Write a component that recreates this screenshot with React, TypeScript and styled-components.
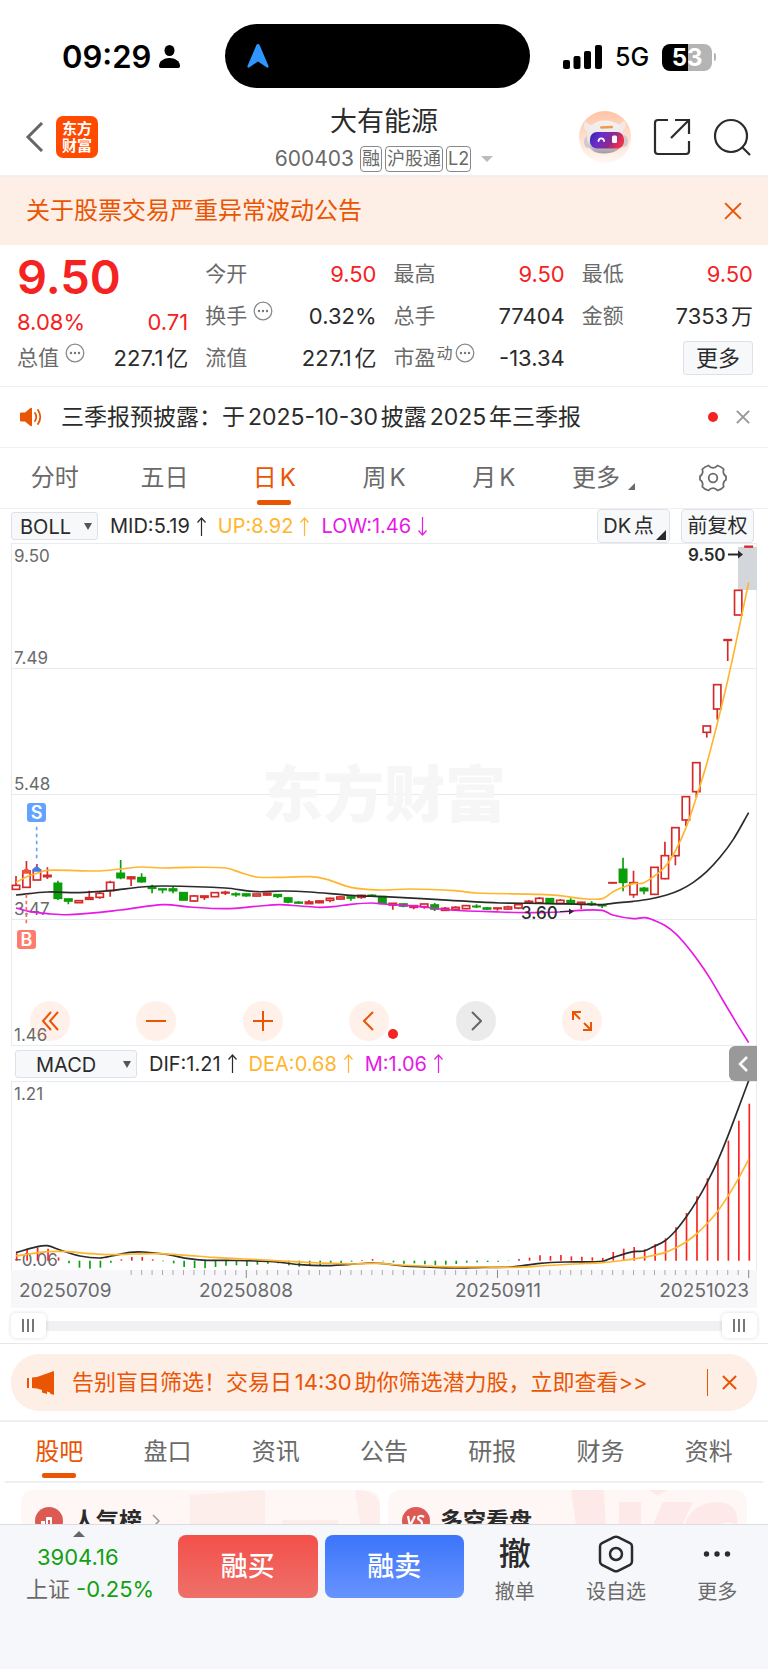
import React from 'react';
import styled, { createGlobalStyle, css } from 'styled-components';

const color = {
  brand: '#ea5504',
  brandSoft: '#fdeee6',
  rise: '#f52222',
  fall: '#12a012',
  ink: '#2b2b2b',
  grey: '#6a6a6a',
  line: '#efeff2',
  panel: '#f6f8fa',
  panelLine: '#dfe1ea',
  up: '#ffb62e',
  low: '#e619e6',
};

const GlobalStyle = createGlobalStyle`
  * { box-sizing: border-box; }
  body {
    margin: 0;
    background: #fff;
    color: ${color.ink};
    font-family: Inter, "Noto Sans CJK SC", sans-serif;
    font-size: 21px;
    line-height: 1.4;
    text-autospace: normal;
  }
  button, select, input { font: inherit; color: inherit; margin: 0; padding: 0; border: 0; background: none; }
  h1, h2, p, dl, dt, dd { margin: 0; font-weight: 400; font-size: inherit; }
  a { color: inherit; text-decoration: none; }
  svg { display: block; flex: none; }
`;

const Page = styled.div`
  display: flex;
  flex-direction: column;
  min-height: 100vh;
  overflow: hidden;
`;

/* ---------- status bar ---------- */
const StatusBar = styled.div`
  display: grid;
  grid-template-columns: 225fr 305fr 238fr;
  align-items: center;
  height: 92px;
  padding-top: 20px;
  color: #000;
`;
const StatusSide = styled.div<{ $end?: boolean }>`
  display: flex;
  align-items: center;
  gap: ${(p) => (p.$end ? 13 : 8)}px;
  padding-top: 2px;
  padding-left: ${(p) => (p.$end ? 33 : 62)}px;
`;
const Clock = styled.span`
  font-size: 31px;
  font-weight: 600;
`;
const Network = styled.span`
  font-size: 25px;
  font-weight: 500;
`;
const Island = styled.div`
  display: flex;
  align-items: center;
  height: 64px;
  padding-left: 21px;
  border-radius: 32px;
  background: #000;
`;
const Battery = styled.div`
  display: flex;
  align-items: center;
  gap: 2px;
  &::after {
    content: '';
    width: 2px;
    height: 8px;
    border-radius: 0 2px 2px 0;
    background: #b4b4b4;
  }
`;
const BatteryLevel = styled.span`
  width: 50px;
  height: 27px;
  border-radius: 8px;
  background: linear-gradient(90deg, #000 53%, #b4b4b4 53%);
  color: #fff;
  font-size: 24px;
  font-weight: 700;
  line-height: 27px;
  text-align: center;
`;

/* ---------- header ---------- */
const Header = styled.header`
  display: grid;
  grid-template-columns: 1fr auto 1fr;
  height: 85px;
  padding: 0 17px;
  border-bottom: 2px solid ${color.line};
`;
const HeaderGroup = styled.div<{ $end?: boolean }>`
  display: flex;
  align-items: center;
  gap: ${(p) => (p.$end ? 22 : 12)}px;
  justify-content: ${(p) => (p.$end ? 'flex-end' : 'flex-start')};
  padding: 6px 0 0 7px;
`;
const IconButton = styled.button`
  display: flex;
  align-items: center;
  justify-content: center;
  cursor: pointer;
`;
const Logo = styled.a`
  width: 42px;
  height: 42px;
  padding-top: 4px;
  border-radius: 7px;
  background: #ff4a00;
  color: #fff;
  font-size: 15px;
  font-weight: 700;
  line-height: 17px;
  text-align: center;
`;
const TitleBlock = styled.div`
  display: flex;
  flex-direction: column;
  align-items: center;
  justify-content: flex-end;
`;
const Title = styled.h1`
  font-size: 27px;
  line-height: 40px;
`;
const SubTitle = styled.div`
  display: flex;
  align-items: center;
  gap: 3px;
  height: 33px;
  color: ${color.grey};
  font-size: 21px;
`;
const Tag = styled.span`
  height: 26px;
  padding: 0 1px;
  border: 1px solid #888;
  border-radius: 4px;
  font-size: 18px;
  line-height: 24px;
`;
const Code = styled.span`
  margin-right: 3px;
`;
const Caret = styled.span<{ $up?: boolean; $gap?: number }>`
  width: 0;
  height: 0;
  margin-left: ${(p) => p.$gap ?? 0}px;
  border: 6px solid transparent;
  ${(p) =>
    p.$up
      ? css`border-top: 0; border-bottom-color: #666;`
      : css`border-bottom: 0; border-top-color: #bbb;`}
`;

/* ---------- notice ---------- */
const Notice = styled.section`
  display: flex;
  align-items: center;
  justify-content: space-between;
  height: 68px;
  padding: 0 26px;
  background: ${color.brandSoft};
  color: ${color.brand};
  font-size: 24px;
`;

/* ---------- quote ---------- */
const Quote = styled.section`
  display: grid;
  grid-template-columns: repeat(4, 1fr);
  column-gap: 17px;
  padding: 8px 15px 7px 17px;
  border-bottom: 1px solid ${color.line};
`;
const QuoteColumn = styled.dl`
  display: flex;
  flex-direction: column;
`;
const QuoteRow = styled.div<{ $short?: boolean }>`
  display: flex;
  align-items: center;
  justify-content: space-between;
  height: ${(p) => (p.$short ? 30 : 42)}px;
  white-space: nowrap;
`;
const Price = styled.div`
  height: 54px;
  color: ${color.rise};
  font-size: 47px;
  font-weight: 600;
  line-height: 48px;
`;
const Label = styled.dt`
  display: flex;
  align-items: center;
  gap: 6px;
  color: ${color.grey};
`;
const Value = styled.dd<{ $rise?: boolean }>`
  color: ${(p) => (p.$rise ? color.rise : 'inherit')};
  font-size: 22px;
`;
const Raised = styled.span<{ $tight?: boolean }>`
  display: flex;
  align-items: center;
  gap: 2px;
  margin: 0 0 9px ${(p) => (p.$tight ? -5 : 0)}px;
  font-size: 16px;
`;
const MoreButton = styled.button`
  width: 70px;
  height: 34px;
  margin-left: auto;
  border: 1px solid ${color.panelLine};
  border-radius: 3px;
  background: ${color.panel};
  font-size: 22px;
  line-height: 30px;
`;

/* ---------- news ---------- */
const News = styled.section`
  display: flex;
  align-items: center;
  height: 61px;
  padding: 0 18px 0 19px;
  border-bottom: 1px solid ${color.line};
  font-size: 23px;
`;
const NewsText = styled.a`
  flex: 1;
  margin-left: 18px;
`;
const Dot = styled.span`
  width: 10px;
  height: 10px;
  margin-right: 18px;
  border-radius: 50%;
  background: ${color.rise};
`;

/* ---------- tabs ---------- */
const Tabs = styled.nav<{ $inset?: boolean }>`
  display: grid;
  grid-template-columns: repeat(7, 1fr);
  height: 61px;
  margin: 0 ${(p) => (p.$inset ? 5 : 0)}px;
  border-bottom: ${(p) => (p.$inset ? 2 : 1)}px solid ${color.line};
`;
const Tab = styled.button<{ $active?: boolean }>`
  position: relative;
  display: flex;
  align-items: center;
  justify-content: center;
  color: ${(p) => (p.$active ? color.brand : color.grey)};
  font-size: 24px;
  &::after {
    content: '';
    display: ${(p) => (p.$active ? 'block' : 'none')};
    position: absolute;
    bottom: 3px;
    left: calc(50% - 17px);
    width: 34px;
    height: 5px;
    border-radius: 2px;
    background: ${color.brand};
  }
`;
const Corner = styled.span<{ $size: number; $color?: string }>`
  align-self: flex-end;
  width: 0;
  height: 0;
  border-left: ${(p) => p.$size}px solid transparent;
  border-bottom: ${(p) => p.$size}px solid ${(p) => p.$color ?? color.grey};
`;
const TabCorner = styled(Corner)`
  margin: 0 0 18px 8px;
`;

/* ---------- charts ---------- */
const Toolbar = styled.div<{ $lower?: boolean }>`
  display: flex;
  align-items: center;
  gap: 12px;
  height: ${(p) => (p.$lower ? 35 : 34)}px;
  padding: ${(p) => (p.$lower ? '0 11px 0 15px' : '0 14px 0 11px')};
  font-size: 20px;
  white-space: nowrap;
`;
const SelectBox = styled.label<{ $wide?: boolean }>`
  position: relative;
  width: ${(p) => (p.$wide ? 122 : 87)}px;
  height: 28px;
  border: 1px solid ${color.panelLine};
  border-radius: 3px;
  background: ${color.panel};
  &::after {
    content: '';
    position: absolute;
    top: 10px;
    right: 5px;
    border: 4px solid transparent;
    border-top: 7px solid #555;
    border-bottom: 0;
  }
`;
const Select = styled.select<{ $wide?: boolean }>`
  width: 100%;
  height: 26px;
  padding-left: ${(p) => (p.$wide ? 20 : 8)}px;
  appearance: none;
  line-height: 26px;
  outline: none;
`;
const Reading = styled.span<{ $color?: string }>`
  display: flex;
  align-items: center;
  gap: 7px;
  color: ${(p) => p.$color ?? 'inherit'};
`;
const ToolButton = styled.button`
  display: flex;
  align-items: center;
  justify-content: center;
  width: 73px;
  height: 34px;
  border: 1px solid ${color.panelLine};
  border-radius: 4px;
  background: ${color.panel};
`;
const ToolCorner = styled(Corner)`
  margin: 0 -2px 2px 2px;
`;
const ToolEnd = styled.div`
  display: flex;
  gap: 11px;
  margin-left: auto;
`;
const CollapseButton = styled(IconButton)`
  width: 28px;
  height: 35px;
  margin-left: auto;
  border-radius: 6px 0 0 6px;
  background: #999;
`;
const ChartArea = styled.section`
  position: relative;
  margin: 0 11px;
  svg.plot {
    position: relative;
    width: 100%;
    height: auto;
  }
`;
const GridLayer = styled.div<{ $open?: boolean }>`
  position: absolute;
  inset: 0;
  display: grid;
  grid-auto-rows: 1fr;
  border: 1px solid #e9ebee;
  border-bottom-width: ${(p) => (p.$open ? 0 : 1)}px;
`;
const GridRow = styled.div<{ $first?: boolean }>`
  display: flex;
  flex-direction: column;
  justify-content: ${(p) => (p.$first ? 'space-between' : 'flex-end')};
  padding: ${(p) => (p.$first ? 2 : 0)}px 0 0 2px;
  border-bottom: 1px solid #e4eaef;
  color: ${color.grey};
  font-size: 17px;
  line-height: 20px;
  &:last-child { border-bottom: 0; }
`;
const Watermark = styled.div`
  position: absolute;
  inset: 0;
  display: flex;
  align-items: center;
  justify-content: center;
  color: #f6f6f6;
  font-size: 61px;
  font-weight: 900;
  line-height: 60px;
`;
const ChartControls = styled.div`
  position: absolute;
  right: 155px;
  bottom: 5px;
  left: 19px;
  display: flex;
  justify-content: space-between;
`;
const RoundButton = styled(IconButton)<{ $muted?: boolean }>`
  position: relative;
  width: 40px;
  height: 40px;
  border-radius: 50%;
  background: ${(p) => (p.$muted ? 'rgba(0,0,0,.08)' : 'rgba(255,90,10,.09)')};
  color: ${(p) => (p.$muted ? '#666' : color.brand)};
`;
const ControlBadge = styled.span`
  position: absolute;
  right: -9px;
  bottom: 2px;
  width: 10px;
  height: 10px;
  border-radius: 50%;
  background: ${color.rise};
`;
const Axis = styled.div`
  margin: 0 11px;
  background: #f7f7fa;
  svg { width: 100%; height: auto; }
`;
const Range = styled.div`
  position: relative;
  display: flex;
  align-items: center;
  height: 36px;
  padding: 0 11px;
  border-bottom: 1px solid #e6e7ea;
`;
const RangeTrack = styled.div`
  flex: 1;
  height: 10px;
  background: #f1f1f3;
`;
const RangeInput = styled.input`
  position: absolute;
  top: 4px;
  left: 11px;
  width: calc(100% - 22px);
  height: 27px;
  appearance: none;
  pointer-events: none;
  &::-webkit-slider-thumb {
    appearance: none;
    width: 35px;
    height: 25px;
    border-radius: 5px;
    background:
      linear-gradient(#777, #777) 11px 6px / 2px 13px no-repeat,
      linear-gradient(#777, #777) 16px 6px / 2px 13px no-repeat,
      linear-gradient(#777, #777) 21px 6px / 2px 13px no-repeat,
      #fff;
    box-shadow: 0 0 4px rgba(0, 0, 0, 0.14);
    pointer-events: auto;
  }
`;

/* ---------- promo ---------- */
const PromoWrap = styled.section`
  padding: 10px 11px 9px;
  border-bottom: 2px solid ${color.line};
`;
const Promo = styled.div`
  display: flex;
  align-items: center;
  height: 57px;
  padding: 0 20px 0 16px;
  border-radius: 28px;
  background: ${color.brandSoft};
  color: ${color.brand};
  font-size: 22px;
  white-space: nowrap;
`;
const PromoLink = styled.a`
  flex: 1;
  margin-left: 17px;
`;
const PromoClose = styled(IconButton)`
  height: 27px;
  padding-left: 14px;
  border-left: 1px solid ${color.brand};
`;

/* ---------- cards ---------- */
const Cards = styled.section`
  display: grid;
  grid-template-columns: 1fr 1fr;
  gap: 8px;
  max-height: 41px;
  padding: 7px 21px 0;
  overflow: hidden;
`;
const Card = styled.a`
  position: relative;
  display: flex;
  align-items: center;
  gap: 10px;
  height: 84px;
  padding: 0 14px 22px;
  border-radius: 12px;
  background: #fef7f5;
  overflow: hidden;
  font-size: 23px;
  font-weight: 700;
`;
const CardArt = styled.svg`
  position: absolute;
  top: 0;
  right: 0;
`;

/* ---------- bottom bar ---------- */
const BottomBar = styled.footer`
  display: grid;
  grid-template-columns: 178fr 286fr 304fr;
  flex: 1;
  align-items: start;
  min-height: 145px;
  padding-top: 6px;
  border-top: 1px solid #dcdde2;
  background: #f6f7fa;
`;
const IndexBox = styled.div`
  padding-left: 26px;
`;
const IndexLine = styled.div<{ $fall?: boolean }>`
  display: flex;
  gap: 6px;
  height: 32px;
  padding-left: ${(p) => (p.$fall ? 11 : 0)}px;
  color: ${(p) => (p.$fall ? color.fall : color.grey)};
  font-size: 22px;
  line-height: 32px;
  white-space: nowrap;
`;
const IndexCaret = styled(Caret)`
  display: block;
  margin: 0 0 4px 47px;
`;
const Fall = styled.span`
  color: ${color.fall};
`;
const Trade = styled.div`
  display: grid;
  grid-template-columns: 1fr 1fr;
  gap: 7px;
  padding-top: 4px;
`;
const TradeButton = styled.button<{ $sell?: boolean }>`
  height: 63px;
  border-radius: 8px;
  background: ${(p) =>
    p.$sell ? 'linear-gradient(#3b75fa, #6893ff)' : 'linear-gradient(#f4504a, #ed7069)'};
  color: #fff;
  font-size: 27px;
  font-weight: 500;
`;
const Tools = styled.div`
  display: grid;
  grid-template-columns: repeat(3, 1fr);
`;
const Tool = styled.button`
  display: flex;
  flex-direction: column;
  align-items: center;
  color: ${color.grey};
  font-size: 20px;
  line-height: 30px;
`;
const ToolIcon = styled.span`
  display: flex;
  align-items: center;
  height: 46px;
  color: ${color.ink};
  font-size: 32px;
  font-weight: 500;
`;

/* ---------- icons ---------- */
type CloseProps = { size: number; stroke: string; width?: number };
const CloseIcon = ({ size, stroke, width = 2 }: CloseProps) => (
  <svg width={size} height={size} viewBox="0 0 16 16" fill="none" stroke={stroke} strokeWidth={(width * 16) / size}>
    <path d="M1 1 15 15M15 1 1 15" />
  </svg>
);
const MoreInfo = () => (
  <svg width="20" height="20" viewBox="0 0 20 20" fill="none" stroke="#8a8a8a" strokeWidth="1.3">
    <circle cx="10" cy="10" r="8.8" />
    <g fill="#777" stroke="none">
      <circle cx="6" cy="10" r="1.2" />
      <circle cx="10" cy="10" r="1.2" />
      <circle cx="14" cy="10" r="1.2" />
    </g>
  </svg>
);
const Arrow = ({ down }: { down?: boolean }) => (
  <svg width="9" height="19" viewBox="0 0 9 19" fill="none" stroke="currentColor" strokeWidth="1.2">
    <path d={down ? 'M4.5 0v18M.5 13.500l4 4.500 4-4.500' : 'M4.5 19V1M.5 5.500l4-4.500 4 4.500'} />
  </svg>
);
const Robot = () => (
  <svg width="52" height="52" viewBox="0 0 52 52">
    <defs>
      <linearGradient id="halo" x2="0" y2="1">
        <stop offset="0" stopColor="#ffc4a6" />
        <stop offset="1" stopColor="#fff8f4" />
      </linearGradient>
      <linearGradient id="shell" x2="0" y2="1">
        <stop offset="0" stopColor="#f6f1f0" />
        <stop offset=".6" stopColor="#e9e5e7" />
        <stop offset="1" stopColor="#a09aa0" />
      </linearGradient>
      <linearGradient id="visor" x2="1" y2=".3">
        <stop offset="0" stopColor="#2d2aa0" />
        <stop offset=".35" stopColor="#6a2bd0" />
        <stop offset=".7" stopColor="#8a2a8e" />
        <stop offset="1" stopColor="#ee2f4c" />
      </linearGradient>
    </defs>
    <circle cx="26" cy="26" r="26" fill="url(#halo)" />
    <path d="M6 10c-2 5-1 9 3 11l8-7c-5 1-9-1-11-4zM45 9c3 4 2 9-2 11l-7-7c4 1 8-1 9-4z" fill="#f2e9e7" />
    <ellipse cx="9" cy="31" rx="4" ry="6" fill="#cfcad0" />
    <ellipse cx="45" cy="30" rx="4" ry="6" fill="#cfcad0" />
    <path d="M26 9.500c12 0 19 7 19 17S38 42 26 42.500 8 37 8 27 14 9.500 26 9.500z" fill="url(#shell)" />
    <rect x="21" y="15" width="13" height="2.500" rx="1.200" fill="#f39a4a" transform="rotate(-3 27 16)" />
    <rect x="11" y="21" width="34" height="16.500" rx="7" fill="url(#visor)" />
    <path d="M19.500 30c.6-3.500 5-3.500 5.600 0" fill="none" stroke="#fff" strokeWidth="1.800" strokeLinecap="round" />
    <rect x="33" y="24.500" width="5" height="7.500" rx="1.500" fill="#fff" />
  </svg>
);
const Gear = () => (
  <svg width="28" height="28" viewBox="0 0 28 28" fill="none" stroke="#6a6a6a" strokeWidth="1.800" strokeLinejoin="round">
    <path d="M9.500 1.500c1.200 1.600 2.600 2.300 4.500 2.300s3.300-.7 4.500-2.300c2.800.8 4.700 1.900 6.200 3.800-.7 1.900-.7 3.200.2 4.700.8 1.400 1.300 1.700 2.100 2.200v3.600c-.8.500-1.300.8-2.100 2.200-.9 1.500-.9 2.800-.2 4.700-1.500 1.900-3.400 3-6.200 3.800-1.200-1.600-2.600-2.300-4.500-2.300s-3.300.7-4.500 2.300c-2.800-.8-4.700-1.900-6.200-3.800.7-1.900.7-3.200-.2-4.700-.8-1.400-1.300-1.700-2.100-2.200v-3.600c.8-.5 1.300-.8 2.100-2.200.9-1.500.9-2.800.2-4.700 1.500-1.900 3.400-3 6.200-3.800z" />
    <circle cx="14" cy="14" r="4.300" />
  </svg>
);

/* ---------- chart data ----------
   Chart units are a third of a pixel; candles are 31.4 units apart. */
const STEP = 31.4;
type Point = [number, number];
type Candle = [kind: 'r' | 'g', high: number, top: number, bottom: number, low: number];

const candles: Candle[] = [
  ['r', 288, 316, 328, 328], ['r', 243, 273, 322, 324], ['r', 252, 270, 300, 300], ['r', 262, 286, 290, 297],
  ['g', 302, 310, 355, 360], ['g', 356, 357, 363, 373], ['r', 361, 362, 368, 369], ['r', 332, 353, 358, 358],
  ['r', 335, 340, 352, 356], ['r', 302, 307, 332, 350], ['g', 240, 280, 293, 298], ['r', 289, 291, 296, 318],
  ['g', 280, 293, 305, 308], ['g', 314, 323, 325, 340], ['g', 326, 327, 329, 340], ['g', 318, 327, 332, 340],
  ['g', 338, 338, 360, 360], ['r', 345, 348, 363, 366], ['r', 347, 348, 352, 360], ['r', 338, 338, 350, 350],
  ['r', 332, 337, 339, 345], ['g', 337, 342, 344, 350], ['g', 340, 342, 347, 350], ['r', 341, 342, 348, 349],
  ['r', 339, 340, 345, 347], ['g', 342, 344, 349, 354], ['g', 352, 354, 366, 370], ['g', 363, 367, 369, 371],
  ['r', 360, 366, 371, 372], ['r', 361, 363, 368, 370], ['r', 353, 355, 361, 367], ['r', 349, 351, 357, 359],
  ['g', 350, 351, 354, 362], ['r', 344, 346, 352, 356], ['g', 343, 346, 348, 350], ['g', 349, 350, 370, 370],
  ['r', 369, 370, 375, 389], ['g', 371, 372, 378, 382], ['r', 375, 377, 382, 388], ['r', 371, 372, 380, 386],
  ['g', 369, 375, 387, 393], ['r', 381, 385, 391, 392], ['r', 379, 382, 388, 392], ['r', 377, 377, 386, 388],
  ['g', 373, 379, 380, 384], ['g', 382, 384, 387, 390], ['r', 384, 384, 386, 392], ['r', 377, 381, 387, 389],
  ['r', 372, 374, 384, 388], ['r', 360, 364, 368, 370], ['r', 351, 355, 368, 370], ['g', 354, 356, 370, 372],
  ['r', 357, 361, 370, 372], ['g', 355, 362, 370, 373], ['r', 365, 367, 373, 388], ['g', 364, 371, 373, 378],
  ['g', 373, 375, 377, 384], ['r', 307, 308, 309, 310], ['g', 233, 268, 307, 334], ['r', 272, 308, 344, 353],
  ['g', 321, 325, 332, 343], ['r', 262, 262, 343, 343], ['r', 185, 227, 296, 298], ['r', 143, 143, 227, 256],
  ['r', 50, 50, 120, 138], ['r', -52, -52, 35, 52], ['r', -162, -162, -143, -127], ['r', -286, -286, -213, -181],
  ['r', -421, -421, -419, -357], ['r', -569, -569, -495, -495], ['r', -702, -701, -699, -698],
];

const upper: Point[] = [
  [48, 307], [80, 290], [110, 280], [142, 271], [300, 273], [361, 267], [424, 261], [487, 264], [565, 262],
  [676, 264], [720, 277], [770, 291], [850, 292], [930, 290], [980, 298], [1052, 322], [1115, 329], [1152, 330],
  [1230, 327], [1366, 332], [1430, 339], [1620, 343], [1680, 347], [1740, 355], [1807, 356], [1838, 336],
  [1869, 322], [1900, 311], [1930, 309], [1963, 288], [1994, 262], [2026, 213], [2058, 143], [2089, 52],
  [2120, -48], [2152, -170], [2183, -298], [2214, -440], [2246, -593],
];
const middle: Point[] = [
  [48, 345], [142, 336], [236, 338], [330, 332], [424, 321], [490, 318], [676, 324], [770, 335], [850, 333],
  [930, 336], [1052, 346], [1152, 350], [1252, 355], [1352, 361], [1500, 369], [1620, 370], [1807, 374],
  [1838, 370], [1900, 364], [1950, 357], [2000, 345], [2040, 330], [2080, 307], [2120, 275], [2160, 232],
  [2200, 178], [2246, 98],
];
const lower: Point[] = [
  [48, 384], [90, 395], [142, 401], [210, 404], [362, 390], [490, 374], [570, 381], [676, 386], [780, 378],
  [838, 374], [900, 378], [958, 382], [1000, 380], [1052, 373], [1115, 369], [1152, 372], [1252, 379],
  [1352, 390], [1500, 396], [1600, 398], [1680, 396], [1740, 391], [1807, 391], [1838, 405], [1900, 416],
  [1935, 413], [1965, 422], [1994, 436], [2026, 460], [2058, 495], [2089, 535], [2130, 595], [2170, 663],
  [2210, 730], [2246, 788],
];
const dif: Point[] = [
  [48, 638], [112, 620], [142, 617], [180, 630], [240, 648], [300, 654], [340, 647], [390, 637], [430, 636],
  [500, 643], [560, 655], [620, 661], [680, 661], [820, 665], [900, 674], [970, 677], [1050, 673], [1115, 669],
  [1152, 671], [1210, 678], [1280, 681], [1360, 684], [1450, 682], [1530, 681], [1620, 670], [1700, 666],
  [1807, 664], [1840, 652], [1900, 635], [1932, 633], [1960, 620], [1994, 603], [2026, 573], [2058, 532],
  [2089, 485], [2120, 430], [2152, 365], [2183, 290], [2214, 208], [2246, 122],
];
const dea: Point[] = [
  [48, 648], [100, 640], [145, 635], [200, 635], [260, 640], [330, 644], [400, 642], [480, 641], [560, 646],
  [640, 652], [740, 657], [860, 664], [960, 669], [1060, 672], [1130, 670], [1200, 675], [1300, 679],
  [1450, 681], [1530, 682], [1620, 678], [1720, 672], [1807, 668], [1870, 661], [1932, 652], [1994, 638],
  [2026, 624], [2058, 606], [2089, 582], [2120, 552], [2152, 515], [2183, 470], [2214, 418], [2246, 358],
];
/* Histogram ends: above 662 is a positive bar, below it a negative one. */
const BASE = 662;
const bars = [
  640, 628, 622, 626, 652, 670, 683, 686, 683, 668, 658, 651, 651, 658, 664, 670, 681, 684, 685, 681, 677, 676,
  678, 674, 671, 670, 676, 680, 678, 676, 670, 669, 665, 660, 657, 664, 667, 671, 670, 673, 675, 674, 672, 668,
  667, 666, 665, 663, 657, 653, 646, 648, 645, 649, 650, 652, 654, 636, 626, 621, 628, 613, 595, 562, 519, 469,
  415, 360, 302, 242, 191,
];

const smooth = (pts: Point[]) =>
  pts.reduce((d, p, i) => {
    if (i === 0) return `M${p[0]} ${p[1]}`;
    const a = pts[Math.max(i - 2, 0)];
    const b = pts[i - 1];
    const c = pts[Math.min(i + 1, pts.length - 1)];
    const dx = (p[0] - b[0]) / 3;
    const s1 = (p[1] - a[1]) / (p[0] - a[0]);
    const s2 = (c[1] - b[1]) / (c[0] - b[0]);
    return `${d}C${b[0] + dx} ${b[1] + s1 * dx} ${p[0] - dx} ${p[1] - s2 * dx} ${p[0]} ${p[1]}`;
  }, '');

const CandleShape = ({ data, index }: { data: Candle; index: number }) => {
  const [kind, high, top, bottom, low] = data;
  const x = 48 + STEP * index;
  const tone = kind === 'r' ? '#d42a2a' : '#0a9e0a';
  return (
    <g stroke={tone} strokeWidth="5" fill={kind === 'g' ? tone : 'none'}>
      <path d={`M${x} ${high}V${top}M${x} ${bottom}V${low}`} />
      <rect x={x - 11} y={top} width="22" height={Math.max(bottom - top, 1)} />
    </g>
  );
};

const Marker = ({ x, y, fill, children }: { x: number; y: number; fill: string; children: string }) => (
  <g>
    <rect x={x} y={y} width="19" height="19" rx="3" fill={fill} />
    <text x={x + 9.5} y={y + 16} fill="#fff" fontSize="18" fontWeight="600" textAnchor="middle">{children}</text>
  </g>
);

const PriceChart = () => (
  <ChartArea aria-label="日K线图">
    <GridLayer>
      <GridRow $first><span>9.50</span><span>7.49</span></GridRow>
      <GridRow>5.48</GridRow>
      <GridRow>3.47</GridRow>
      <GridRow>1.46</GridRow>
    </GridLayer>
    <Watermark aria-hidden>东方财富</Watermark>
    <svg className="plot" viewBox="0 0 746 503">
      <rect x="727" y="4" width="19" height="43" fill="#d3d7dc" />
      <g transform="scale(.33333) translate(-33 711)" fill="none">
        {candles.map((c, i) => <CandleShape key={i} data={c} index={i} />)}
        <path d={smooth(upper)} stroke={color.up} strokeWidth="5" />
        <path d={smooth(middle)} stroke={color.ink} strokeWidth="5" />
        <path d={smooth(lower)} stroke={color.low} strokeWidth="5" />
        <path d="M110 140V240" stroke="#62a3ff" strokeWidth="5" strokeDasharray="11 10" />
        <path d="M79 343V437" stroke="#ff6a5c" strokeWidth="5" strokeDasharray="11 8" />
        <path d="M110 257l12 10v8H98v-8z" fill="#3f7ee8" />
        <path d="M79 263l12 10v8H67v-8z" fill="#f4503c" />
      </g>
      <Marker x={16} y={260} fill="#62a3ff">S</Marker>
      <Marker x={6} y={387} fill="#ff7b6c">B</Marker>
      <g fill={color.ink} stroke="none" fontSize="17">
        <text x="677" y="18" fontWeight="600">9.50</text>
        <text x="510" y="376" fontWeight="500">3.60</text>
        <path d="M717 10.500h10v-3l5 4-5 4v-3h-10zM549 368h9v-2.500l5 3-5 3V369h-9z" />
      </g>
    </svg>
    <ChartControls>
      <RoundButton aria-label="最早">
        <svg width="18" height="20" viewBox="0 0 18 20" fill="none" stroke="currentColor" strokeWidth="2"><path d="M10 1 2 10l8 9M17 1 9 10l8 9" /></svg>
      </RoundButton>
      <RoundButton aria-label="缩小">
        <svg width="20" height="20" fill="none" stroke="currentColor" strokeWidth="2"><path d="M0 10h20" /></svg>
      </RoundButton>
      <RoundButton aria-label="放大">
        <svg width="20" height="20" fill="none" stroke="currentColor" strokeWidth="2"><path d="M0 10h20M10 0v20" /></svg>
      </RoundButton>
      <RoundButton aria-label="向前">
        <svg width="12" height="20" viewBox="0 0 12 20" fill="none" stroke="currentColor" strokeWidth="2"><path d="M10 1 1 10l9 9" /></svg>
        <ControlBadge />
      </RoundButton>
      <RoundButton $muted aria-label="向后">
        <svg width="12" height="20" viewBox="0 0 12 20" fill="none" stroke="currentColor" strokeWidth="2"><path d="M2 1l9 9-9 9" /></svg>
      </RoundButton>
      <RoundButton aria-label="全屏">
        <svg width="22" height="22" viewBox="0 0 22 22" fill="none" stroke="currentColor" strokeWidth="2"><path d="M2 10V2h8M2 2l7 7M20 12v8h-8M20 20l-7-7" /></svg>
      </RoundButton>
    </ChartControls>
  </ChartArea>
);

const MacdChart = () => (
  <ChartArea aria-label="MACD">
    <GridLayer $open>
      <GridRow $first><span>1.21</span><span>-0.06</span></GridRow>
    </GridLayer>
    <svg className="plot" viewBox="0 0 746 189">
      <g transform="scale(.33333) translate(-33 -123)" fill="none">
        {bars.map((end, i) => (
          <path key={i} d={`M${50 + STEP * i} ${BASE}V${end}`} stroke={end < BASE ? '#fa2020' : '#0a9e0a'} strokeWidth="5" />
        ))}
        <path d={smooth(dif)} stroke={color.ink} strokeWidth="5" />
        <path d={smooth(dea)} stroke={color.up} strokeWidth="5" />
      </g>
    </svg>
  </ChartArea>
);

const DateAxis = () => (
  <Axis>
    <svg viewBox="0 0 746 38">
      {Array.from({ length: 60 }, (_, k) => k + 11).map((i) => {
        const major = i === 22 || i === 46 || i === 70;
        return <rect key={i} x={4.5 + (STEP / 3) * i} y="0" width="1" height={major ? 8 : 5} fill={major ? '#888' : '#aaa'} />;
      })}
      <g fill={color.grey} fontSize="19">
        <text x="8" y="27">20250709</text>
        <text x="235" y="27" textAnchor="middle">20250808</text>
        <text x="487" y="27" textAnchor="middle">20250911</text>
        <text x="738" y="27" textAnchor="end">20251023</text>
      </g>
    </svg>
  </Axis>
);

const periods = ['分时', '五日', '日K', '周K', '月K'];
const sections = ['股吧', '盘口', '资讯', '公告', '研报', '财务', '资料'];

export default function App() {
  return (
    <Page>
      <GlobalStyle />
      <StatusBar>
        <StatusSide>
          <Clock>09:29</Clock>
          <svg width="21" height="23" viewBox="0 0 21 23"><ellipse cx="10.500" cy="5.500" rx="5" ry="5.500" /><path d="M0 21c0-5 5-8 10.500-8S21 16 21 21c0 1-.5 2-2 2H2c-1.500 0-2-1-2-2z" /></svg>
        </StatusSide>
        <Island>
          <svg width="24" height="26" viewBox="0 0 24 26" fill="#2f96ff"><path d="M12 1c1.200 0 1.600.8 2 2l8.500 20c.5 1.500-.8 2.200-2 1.300L12 18.500l-8.500 5.800c-1.200.9-2.500.2-2-1.300L10 3c.4-1.200.8-2 2-2z" /></svg>
        </Island>
        <StatusSide $end>
          <svg width="39" height="24" viewBox="0 0 39 24"><rect y="15" width="7" height="9" rx="2" /><rect x="10.500" y="11" width="7" height="13" rx="2" /><rect x="21" y="6" width="7" height="18" rx="2" /><rect x="32" width="7" height="24" rx="2" /></svg>
          <Network>5G</Network>
          <Battery><BatteryLevel>53</BatteryLevel></Battery>
        </StatusSide>
      </StatusBar>

      <Header>
        <HeaderGroup>
          <IconButton aria-label="返回">
            <svg width="20" height="30" viewBox="0 0 20 30" fill="none" stroke="#666" strokeWidth="3"><path d="M18 1 4 15l14 14" /></svg>
          </IconButton>
          <Logo href="#home">东方<br />财富</Logo>
        </HeaderGroup>
        <TitleBlock>
          <Title>大有能源</Title>
          <SubTitle>
            <Code>600403</Code>
            <Tag>融</Tag>
            <Tag>沪股通</Tag>
            <Tag>L2</Tag>
            <Caret $gap={7} />
          </SubTitle>
        </TitleBlock>
        <HeaderGroup $end>
          <IconButton aria-label="智能助手"><Robot /></IconButton>
          <IconButton aria-label="分享">
            <svg width="38" height="38" viewBox="0 0 38 38" fill="none" stroke={color.ink} strokeWidth="2.200"><path d="M15 2H5Q2 2 2 5v28q0 3 3 3h28q3 0 3-3V23M22 2h14v14M36 2 18 20" /></svg>
          </IconButton>
          <IconButton aria-label="搜索">
            <svg width="38" height="38" viewBox="0 0 38 38" fill="none" stroke={color.ink} strokeWidth="2.200"><circle cx="18" cy="18" r="16" /><path d="m29 29 8 8" /></svg>
          </IconButton>
        </HeaderGroup>
      </Header>

      <Notice>
        <a href="#notice">关于股票交易严重异常波动公告</a>
        <IconButton aria-label="关闭公告"><CloseIcon size={18} stroke={color.brand} /></IconButton>
      </Notice>

      <Quote>
        <QuoteColumn as="div">
          <Price>9.50</Price>
          <QuoteRow $short><Value as="span" $rise>8.08%</Value><Value as="span" $rise>0.71</Value></QuoteRow>
          <QuoteRow><Label as="span">总值<Raised><MoreInfo /></Raised></Label><Value as="span">227.1亿</Value></QuoteRow>
        </QuoteColumn>
        <QuoteColumn>
          <QuoteRow><Label>今开</Label><Value $rise>9.50</Value></QuoteRow>
          <QuoteRow><Label>换手<Raised><MoreInfo /></Raised></Label><Value>0.32%</Value></QuoteRow>
          <QuoteRow><Label>流值</Label><Value>227.1亿</Value></QuoteRow>
        </QuoteColumn>
        <QuoteColumn>
          <QuoteRow><Label>最高</Label><Value $rise>9.50</Value></QuoteRow>
          <QuoteRow><Label>总手</Label><Value>77404</Value></QuoteRow>
          <QuoteRow><Label>市盈<Raised $tight>动<MoreInfo /></Raised></Label><Value>-13.34</Value></QuoteRow>
        </QuoteColumn>
        <QuoteColumn as="div">
          <QuoteRow><Label as="span">最低</Label><Value as="span" $rise>9.50</Value></QuoteRow>
          <QuoteRow><Label as="span">金额</Label><Value as="span">7353万</Value></QuoteRow>
          <QuoteRow><MoreButton>更多</MoreButton></QuoteRow>
        </QuoteColumn>
      </Quote>

      <News>
        <svg width="24" height="20" viewBox="0 0 24 20" fill={color.brand}>
          <path d="M1 6.500Q1 5.500 2 5.500h4L11.500 1q1.500-1 1.500 1v16q0 2-1.500 1L6 14.500H2q-1 0-1-1z" />
          <path d="M16 6q2.500 4 0 8M19 3q4.500 7 0 14" fill="none" stroke={color.brand} strokeWidth="1.800" strokeLinecap="round" />
        </svg>
        <NewsText href="#news">三季报预披露：于2025-10-30披露2025年三季报</NewsText>
        <Dot />
        <IconButton aria-label="关闭提醒"><CloseIcon size={14} stroke="#999" /></IconButton>
      </News>

      <Tabs aria-label="周期">
        {periods.map((name) => <Tab key={name} $active={name === '日K'}>{name}</Tab>)}
        <Tab>更多<TabCorner $size={7} /></Tab>
        <Tab aria-label="图表设置"><Gear /></Tab>
      </Tabs>

      <Toolbar>
        <SelectBox>
          <Select aria-label="主图指标" defaultValue="BOLL"><option>BOLL</option><option>MA</option></Select>
        </SelectBox>
        <Reading>MID:5.19<Arrow /></Reading>
        <Reading $color={color.up}>UP:8.92<Arrow /></Reading>
        <Reading $color={color.low}>LOW:1.46<Arrow down /></Reading>
        <ToolEnd>
          <ToolButton>DK点<ToolCorner $size={10} $color={color.ink} /></ToolButton>
          <ToolButton>前复权</ToolButton>
        </ToolEnd>
      </Toolbar>
      <PriceChart />

      <Toolbar $lower>
        <SelectBox $wide>
          <Select $wide aria-label="副图指标" defaultValue="MACD"><option>MACD</option><option>KDJ</option></Select>
        </SelectBox>
        <Reading>DIF:1.21<Arrow /></Reading>
        <Reading $color={color.up}>DEA:0.68<Arrow /></Reading>
        <Reading $color={color.low}>M:1.06<Arrow /></Reading>
        <CollapseButton aria-label="展开侧栏">
          <svg width="10" height="16" viewBox="0 0 10 16" fill="none" stroke="#fff" strokeWidth="2.500"><path d="M9 1 2 8l7 7" /></svg>
        </CollapseButton>
      </Toolbar>
      <MacdChart />
      <DateAxis />
      <Range>
        <RangeTrack />
        <RangeInput type="range" aria-label="起始日期" defaultValue={0} />
        <RangeInput type="range" aria-label="结束日期" defaultValue={100} />
      </Range>

      <PromoWrap>
        <Promo>
          <svg width="28" height="24" viewBox="0 0 28 24" fill={color.brand}><rect y="7" width="2" height="10" /><path d="M5 6.500 10 6 27 0v24l-4-1.500v-1l-3-1v2.500l-5-1.500v-2.500L10 17.500 5 17z" /></svg>
          <PromoLink href="#promo">告别盲目筛选！交易日14:30助你筛选潜力股，立即查看&gt;&gt;</PromoLink>
          <PromoClose aria-label="关闭推广"><CloseIcon size={15} stroke={color.brand} /></PromoClose>
        </Promo>
      </PromoWrap>

      <Tabs $inset aria-label="资讯栏目">
        {sections.map((name) => <Tab key={name} $active={name === '股吧'}>{name}</Tab>)}
      </Tabs>

      <Cards>
        <Card href="#rank">
          <CardArt width="190" height="84" viewBox="0 0 190 84" fill="#fdeeec"><path d="M0 5 75 0v84H0zM92 30h56v54H92zM165 0q25 0 25 20v64h-12z" /></CardArt>
          <svg width="28" height="28" viewBox="0 0 28 28"><circle cx="14" cy="14" r="14" fill="#dd5a54" /><path d="M6 21v-7h4v7zM11 21V11q0-1 1-1h4q1 0 1 1v10h-2v-8h-2v8zM18 21v-4h4v4z" fill="#fff" /></svg>
          <span>人气榜</span>
          <svg width="8" height="14" viewBox="0 0 8 14" fill="none" stroke="#999" strokeWidth="1.500"><path d="m1 1 6 6-6 6" /></svg>
        </Card>
        <Card href="#battle">
          <CardArt width="176" height="84" viewBox="0 0 176 84" fill="#fdeae8"><path d="M0 0h33l4 84H12zM48 12h22v50L92 12h30L88 84H48zM78 0h18l-9 6zM166 34c2-14-6-22-20-22-20 0-34 14-34 34 0 14 6 20 16 26h38c-14-8-26-14-26-26 0-10 10-16 26-12z" /></CardArt>
          <svg width="28" height="28" viewBox="0 0 28 28"><circle cx="14" cy="14" r="14" fill="#dd5a54" /><path d="M6 9l2 10 5-10M22 10c-3-2-6-1-6 1s4 2 4 5-4 4-7 2" fill="none" stroke="#fff" strokeWidth="2.200" /></svg>
          <span>多空看盘</span>
        </Card>
      </Cards>

      <BottomBar>
        <IndexBox>
          <IndexCaret $up />
          <IndexLine $fall>3904.16</IndexLine>
          <IndexLine>上证<Fall>-0.25%</Fall></IndexLine>
        </IndexBox>
        <Trade>
          <TradeButton>融买</TradeButton>
          <TradeButton $sell>融卖</TradeButton>
        </Trade>
        <Tools>
          <Tool><ToolIcon>撤</ToolIcon>撤单</Tool>
          <Tool>
            <ToolIcon>
              <svg width="36" height="38" viewBox="0 0 36 38" fill="none" stroke="currentColor" strokeWidth="2.500" strokeLinejoin="round"><path d="M16 2.200q2-1 4 0l12 6q2 1 2 3.300v15q0 2.300-2 3.300l-12 6q-2 1-4 0l-12-6q-2-1-2-3.300v-15q0-2.300 2-3.300z" /><circle cx="18" cy="19" r="6" /></svg>
            </ToolIcon>
            设自选
          </Tool>
          <Tool>
            <ToolIcon>
              <svg width="28" height="6" viewBox="0 0 28 6" fill="currentColor"><circle cx="3.500" cy="3" r="2.700" /><circle cx="14" cy="3" r="2.700" /><circle cx="24.500" cy="3" r="2.700" /></svg>
            </ToolIcon>
            更多
          </Tool>
        </Tools>
      </BottomBar>
    </Page>
  );
}
